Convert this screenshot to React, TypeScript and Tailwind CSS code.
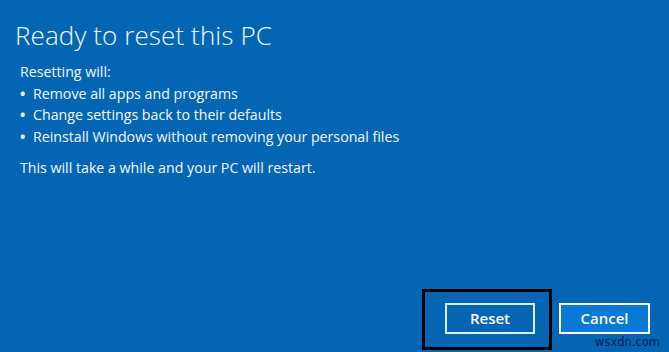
import React from 'react'

const ITEMS = [
  'Remove all apps and programs',
  'Change settings back to their defaults',
  'Reinstall Windows without removing your personal files',
]

export default function App() {
  return (
    <div
      className="relative flex h-[352px] w-[669px] flex-col overflow-hidden bg-[#0465b5] text-[#f4faff]"
      style={{ fontFamily: '"Open Sans", "Noto Sans", sans-serif' }}
    >
      {/* Header */}
      <h1 className="pl-[15px] pt-[18px] text-[26px] font-light leading-[34px] tracking-[0.1px]">
        Ready to reset this PC
      </h1>

      <div className="pl-[20px] pt-[9px] text-[14.2px] leading-[21.5px]">
        <p>Resetting will:</p>
        <ul>
          {ITEMS.map((t) => (
            <li key={t} className="flex">
              <span className="w-[13px] font-bold">•</span>
              <span>{t}</span>
            </li>
          ))}
        </ul>
        <p className="mt-[10px]">This will take a while and your PC will restart.</p>
      </div>

      {/* Buttons */}
      <div className="mt-auto flex items-end justify-end gap-[7px] pb-[2px] pr-[19px]">
        <div className="border-[3px] border-black pb-[13px] pl-[20px] pr-[14px] pt-[11px]">
          <button className="h-[31px] w-[90px] border-2 border-[#dcefff] bg-[#0465b5] text-[15px] font-semibold text-white">
            Reset
          </button>
        </div>
        <button className="mb-[16px] h-[31px] w-[91px] border-2 border-white bg-[#0a78d6] text-[15px] font-semibold text-white">
          Cancel
        </button>
      </div>

      <span
        className="absolute left-[595px] top-[335px] text-[11.5px] leading-[14px] text-[#0b1f55]"
        style={{ fontFamily: '"DejaVu Sans", sans-serif' }}
      >
        wsxdn.com
      </span>
    </div>
  )
}
